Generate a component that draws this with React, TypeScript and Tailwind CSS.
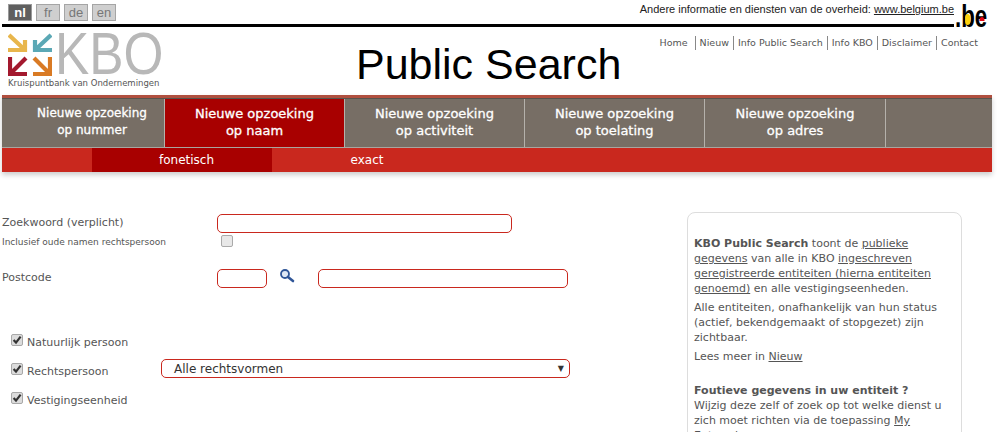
import React from "react";

const tabs = ["op nummer", "op naam", "op activiteit", "op toelating", "op adres"];
const tabWidths = ["w-[163px]", "w-[180px]", "w-[180px]", "w-[180px]", "w-[181px]"];

function Arrows() {
  return (
    <svg width="44" height="43" viewBox="0 0 44 43" className="shrink-0">
      <g fill="none" strokeWidth="4.2">
        <path d="M1 2 L17 17 M0 17 H19 M17 7 V19" stroke="#e8b64c" />
        <path d="M43 2 L27 17 M25 17 H44 M27 7 V19" stroke="#5ba8b5" />
        <path d="M18 25 L2 41 M2 24 V43 M0 41 H19" stroke="#a3192e" />
        <path d="M26 25 L42 41 M42 24 V43 M44 41 H25" stroke="#d97a24" />
      </g>
    </svg>
  );
}

function Check({ className = "" }: { className?: string }) {
  return (
    <span className={"flex h-[12px] w-[12px] shrink-0 items-center justify-center rounded-[2px] border border-[#a8a8a8] bg-[#dcdcdc] " + className}>
      <svg width="10" height="10" viewBox="0 0 10 10" className="shrink-0">
        <path d="M1.6 5 L4 7.6 L8.6 1.6" fill="none" stroke="#333" strokeWidth="2.2" />
      </svg>
    </span>
  );
}

function CheckRow({ label }: { label: string }) {
  return (
    <div className="flex h-[29px] items-start">
      <Check className="ml-[11px] mt-[-1px]" />
      <span className="ml-[4px] mt-[1px] text-[11px] leading-[14px] text-[#555]">{label}</span>
    </div>
  );
}

export default function App() {
  return (
    <div className="h-[432px] w-[1003px] overflow-hidden bg-white font-['DejaVu_Sans',Verdana,sans-serif] text-[#555]">
      {/* top bar */}
      <div className="flex h-[27px] w-[990px]">
        <div className="ml-[2px] h-[27px] w-[952px] border-b-[3px] border-black">
          <div className="flex items-start justify-between">
            <div className="ml-[6px] mt-[4px] flex gap-[4px] font-['Liberation_Sans',Arial,sans-serif] text-[13px] leading-[15px]">
              <span className="flex h-[17px] w-[24px] items-center justify-center border border-[#999] bg-[#5f5f5f] font-bold text-white">nl</span>
              <span className="flex h-[17px] w-[24px] items-center justify-center border border-[#a5a5a5] bg-[#cfcfcf] text-[#777]">fr</span>
              <span className="flex h-[17px] w-[24px] items-center justify-center border border-[#a5a5a5] bg-[#cfcfcf] text-[#777]">de</span>
              <span className="flex h-[17px] w-[24px] items-center justify-center border border-[#a5a5a5] bg-[#cfcfcf] text-[#777]">en</span>
            </div>
            <div className="mt-[2px] whitespace-nowrap font-['Liberation_Sans',Arial,sans-serif] text-[11px] leading-[14px] text-[#222]">
              Andere informatie en diensten van de overheid: <span className="underline">www.belgium.be</span>
            </div>
          </div>
        </div>
        <div className="relative ml-[1px] mt-[1px] h-[30px] w-[34px] origin-left scale-x-[0.72] font-['Liberation_Sans',Arial,sans-serif] text-[31px] font-bold leading-[32px] text-black">
          <span>.</span>
          <span className="relative">
            b
            <span className="absolute bottom-[9px] left-[5px] h-[11px] w-[7px] rounded-full bg-[#fdd20a]" />
          </span>
          <span className="relative">
            e
            <span className="absolute bottom-[13px] left-[6px] h-[4px] w-[7px] rounded-t-full bg-[#e30613]" />
          </span>
        </div>
      </div>

      {/* header */}
      <div className="ml-[2px] flex h-[68px] w-[990px] items-start">
        <div className="ml-[6px] mt-[6px] w-[160px] shrink-0">
          <div className="flex h-[43px] items-center">
            <Arrows />
            <span className="ml-[3px] origin-left scale-x-[0.87] font-['Liberation_Sans',Arial,sans-serif] text-[59px] font-normal leading-[43px] text-[#b8b8b8]">KBO</span>
          </div>
          <div className="mt-[2px] whitespace-nowrap text-[8.5px] leading-[11px] text-[#555]">Kruispuntbank van Ondernemingen</div>
        </div>
        <div className="ml-[188px] mt-[12px] whitespace-nowrap font-['Liberation_Sans',Arial,sans-serif] text-[43px] leading-[50px] text-black">Public Search</div>
        <div className="ml-auto mr-[10px] mt-[9px] flex text-[9.5px] leading-[14px] text-[#555]">
          {["Home", "Nieuw", "Info Public Search", "Info KBO", "Disclaimer", "Contact"].map((t, i) => (
            <span key={t} className={i === 0 ? "pr-[7px]" : "border-l border-[#888] px-[4px]"}>{t}</span>
          ))}
        </div>
      </div>

      {/* nav */}
      <div className="ml-[2px] w-[990px] shadow-[0_3px_5px_rgba(0,0,0,0.2)]">
        <div className="h-[3px] bg-[#b04f3f]" />
        <div className="flex h-[50px] border-y border-[#a9a59f] border-t-[#57534d] bg-[#776e65]">
          {tabs.map((t, i) => (
            <div
              key={t}
              className={`${tabWidths[i]} flex flex-col items-center justify-center border-r border-[#b5b1ab] leading-[17px] text-white [-webkit-text-stroke:0.3px_white] ${i === 0 ? "text-[12px]" : "text-[13px]"} ${i === 1 ? "bg-[#a80000]" : ""}`}
            >
              <span className={i === 0 ? "mt-[-2px] pl-[18px] text-center" : "mt-[-2px] text-center"}>Nieuwe opzoeking<br />{t}</span>
            </div>
          ))}
        </div>
        <div className="flex h-[24px] bg-[#c9281e] pl-[90px] text-[12px] leading-[24px] text-white">
          <div className="w-[180px] bg-[#a80000] pl-[9px] text-center">fonetisch</div>
          <div className="w-[180px] pl-[10px] text-center">exact</div>
        </div>
      </div>

      {/* body */}
      <div className="mt-[42px] flex items-start">
        <div className="w-[687px] shrink-0">
          <div className="flex items-start">
            <label className="ml-[2px] mt-[2px] w-[215px] text-[11px] leading-[14px]">Zoekwoord (verplicht)</label>
            <div className="h-[19px] w-[295px] rounded-[5px] border border-[#c9281e] bg-white" />
          </div>
          <div className="mt-[2px] flex items-start">
            <label className="ml-[2px] mt-[1px] w-[219px] text-[9px] leading-[12px]">Inclusief oude namen rechtspersoon</label>
            <span className="h-[12px] w-[12px] rounded-[2px] border border-[#aaa] bg-[#e8e8e8]" />
          </div>
          <div className="mt-[21px] flex items-start">
            <label className="ml-[2px] mt-[2px] w-[215px] text-[11px] leading-[14px]">Postcode</label>
            <div className="h-[19px] w-[50px] rounded-[5px] border border-[#c9281e] bg-white" />
            <svg width="16" height="15" viewBox="0 0 16 15" className="ml-[12px] mt-[-1px] shrink-0">
              <circle cx="6" cy="6" r="4" fill="#dfe8f4" stroke="#2f5597" strokeWidth="1.8" />
              <path d="M9 9 L14 13" stroke="#2f5597" strokeWidth="2.6" strokeLinecap="round" />
            </svg>
            <div className="ml-[23px] h-[19px] w-[250px] rounded-[5px] border border-[#c9281e] bg-white" />
          </div>
          <div className="relative mt-[47px]">
            <CheckRow label="Natuurlijk persoon" />
            <CheckRow label="Rechtspersoon" />
            <CheckRow label="Vestigingseenheid" />
            <div className="absolute left-[161px] top-[24px] flex h-[19px] w-[409px] items-center justify-between rounded-[5px] border border-[#c9281e] bg-white pl-[12px] pr-[5px] text-[12px] text-[#333]">
              <span>Alle rechtsvormen</span>
              <span className="text-[8px] leading-none text-[#333]">▼</span>
            </div>
          </div>
        </div>

        <div className="mt-[-2px] h-[300px] w-[275px] shrink-0 rounded-[8px] border border-[#ddd] px-[6px] pt-[23px] text-[11px] leading-[15px] text-[#555]">
          <p><b>KBO Public Search</b> toont de <u>publieke gegevens</u> van alle in KBO <u>ingeschreven geregistreerde entiteiten (hierna entiteiten genoemd)</u> en alle vestigingseenheden.</p>
          <p className="mt-[4px]">Alle entiteiten, onafhankelijk van hun status (actief, bekendgemaakt of stopgezet) zijn zichtbaar.</p>
          <p className="mt-[4px]">Lees meer in <u>Nieuw</u></p>
          <p className="mt-[19px]"><b>Foutieve gegevens in uw entiteit ?</b><br />Wijzig deze zelf of zoek op tot welke dienst u zich moet richten via de toepassing <u>My Enterprise</u></p>
        </div>
      </div>
    </div>
  );
}
